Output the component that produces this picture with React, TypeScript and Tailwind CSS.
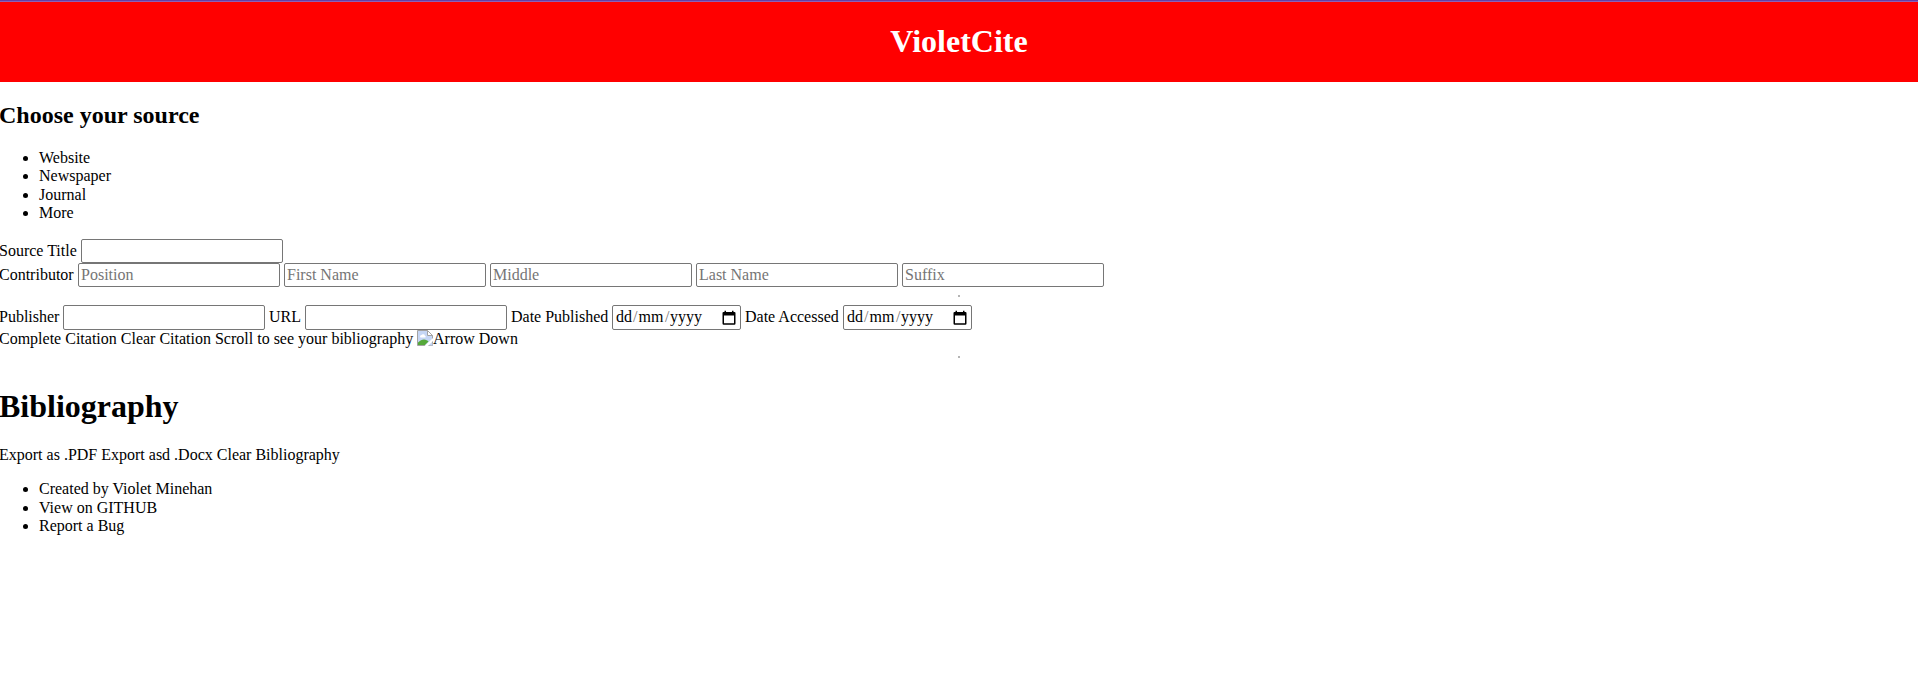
import React from "react";

function Field({ placeholder = "", tall = false }: { placeholder?: string; tall?: boolean }) {
  return (
    <input
      type="text"
      placeholder={placeholder}
      className={
        "block w-[202px] shrink-0 rounded-[2px] border border-[#767676] bg-white px-[2px] py-0 text-base leading-[18px] placeholder:text-[#757575] " +
        (tall ? "h-[25px]" : "h-6")
      }
    />
  );
}

function DateField() {
  return (
    <div className="flex h-[25px] w-[129px] shrink-0 items-start rounded-[2px] border border-[#767676] bg-white pt-[2px] pl-[3px]">
      <span className="flex w-[106px] leading-[18px]">
        <span>dd</span>
        <span className="w-[6px] pl-px text-[#757575]">/</span>
        <span className="w-[26px] text-center">mm</span>
        <span className="w-[6px] pl-px text-[#757575]">/</span>
        <span>yyyy</span>
      </span>
      <svg width="14" height="15" viewBox="0 0 14 15" className="mt-[2px] shrink-0">
        <path d="M2.500.8h1.500v2H2.500zM10 .8h1.500v2H10z" fill="#000" />
        <path d="M1.500 2h11a1 1 0 0 1 1 1v10.500a1.200 1.200 0 0 1-1.200 1.200H1.700A1.200 1.200 0 0 1 .5 13.500V3a1 1 0 0 1 1-1zM2 5.500v7.700h10V5.500z" fill="#000" fillRule="evenodd" />
      </svg>
    </div>
  );
}

function BrokenImage() {
  return (
    <svg width="16" height="16" viewBox="0 0 16 16" className="shrink-0">
      <path d="M.5.5h10l5 5v10H.5z" fill="#c5d6f5" stroke="#a3a3a3" />
      <path d="M10.500.5v5h5z" fill="#fff" stroke="#a3a3a3" />
      <path d="M3 6.500a1.500 1.500 0 0 1 1.500-1.500 2 2 0 0 1 3.500 1c1 0 1 1.500 0 1.500H3.500z" fill="#fff" />
      <path d="M1 15v-2.500C3 10.500 5 9.500 7 9.500s3.500 1 4.500 2L8 15z" fill="#55a83a" />
      <path d="M7.500 16l8.500-8v3l-5 5z" fill="#fff" />
      <path d="M12 15.500l3.500-3v3z" fill="#c5d6f5" />
    </svg>
  );
}

function Divider() {
  return <hr className="mx-auto h-[2px] w-[2px] border border-[#b4b4b4]" />;
}

export default function App() {
  return (
    <div className="min-h-[686px] overflow-hidden bg-white font-['Liberation_Serif',serif] text-base leading-[18px] text-black">
      <div className="h-px bg-[#6640a5]" />
      <div className="h-px bg-[#8b62b8]" />
      <header className="h-20 bg-[#ff0000] pt-[21px] text-center">
        <h1 className="text-[32px] leading-[37px] font-bold text-white">VioletCite</h1>
      </header>

      <h2 className="-ml-px mt-5 h-[47px] text-2xl leading-[27px] font-bold">Choose your source</h2>

      <ul className="h-[90px] list-disc pl-[39px] leading-[18.4px]">
        <li>Website</li>
        <li>Newspaper</li>
        <li>Journal</li>
        <li>More</li>
      </ul>

      <form className="whitespace-nowrap">
        <div className="flex h-6 items-center">
          <label className="-ml-px w-[82px] shrink-0">Source Title</label>
          <Field />
        </div>
        <div className="flex h-6 items-center gap-1">
          <label className="-ml-px w-[75px] shrink-0">Contributor</label>
          <Field placeholder="Position" />
          <Field placeholder="First Name" />
          <Field placeholder="Middle" />
          <Field placeholder="Last Name" />
          <Field placeholder="Suffix" />
        </div>
        <div className="h-[18px] pt-2">
          <Divider />
        </div>
        <div className="flex h-[25px] items-start">
          <label className="-ml-px w-16 shrink-0 pt-[3px]">Publisher</label>
          <Field tall />
          <label className="w-10 shrink-0 pt-[3px] pl-1">URL</label>
          <Field tall />
          <label className="w-[105px] shrink-0 pt-[3px] pl-1">Date Published</label>
          <DateField />
          <label className="w-[102px] shrink-0 pt-[3px] pl-1">Date Accessed</label>
          <DateField />
        </div>
      </form>

      <div className="flex h-[26px] items-start whitespace-nowrap">
        <span className="-ml-px w-[418px] shrink-0">Complete Citation Clear Citation Scroll to see your bibliography</span>
        <BrokenImage />
        <span>Arrow Down</span>
      </div>
      <Divider />

      <h1 className="-ml-px mt-[30px] h-[58px] text-[32px] leading-[37px] font-bold">Bibliography</h1>
      <p className="-ml-px">Export as .PDF Export asd .Docx Clear Bibliography</p>
      <ul className="mt-[16.4px] list-disc pl-[39px] leading-[18.4px]">
        <li>Created by Violet Minehan</li>
        <li>View on GITHUB</li>
        <li>Report a Bug</li>
      </ul>
    </div>
  );
}
